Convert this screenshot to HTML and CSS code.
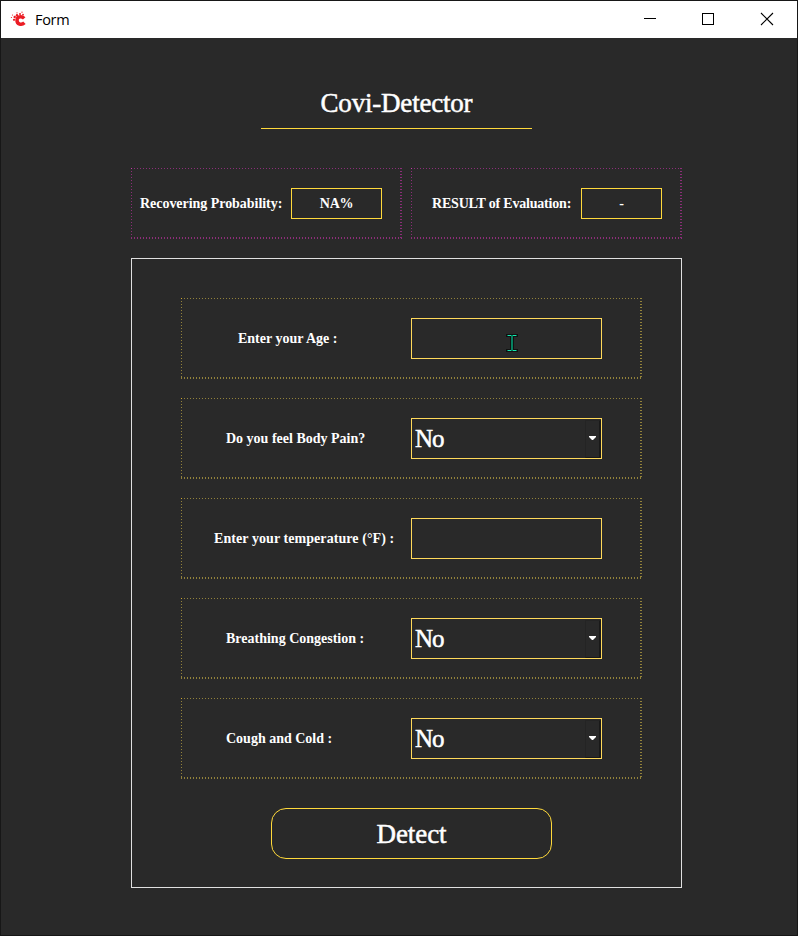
FILE: index.html
```html
<!DOCTYPE html>
<html lang="en">
<head>
<meta charset="utf-8">
<title>Form</title>
<link rel="stylesheet" href="styles.css">
</head>
<body>
<div class="window">
  <header class="titlebar">
    <svg class="logo" width="18" height="18" viewBox="0 0 18 18"><path d="M14.2 7.4C11.5 4.6 7.2 5.6 7 9C6.8 13.4 11.6 14.6 14.4 11.8" fill="none" stroke="#eb1c24" stroke-width="3.5"/><g fill="#eb1c24"><circle cx="4.7" cy="6" r="1.2"/><circle cx="7" cy="4.3" r="1.2"/><circle cx="10" cy="3" r="1"/><circle cx="13" cy="3.6" r=".9"/><circle cx="2.5" cy="4" r=".6"/><circle cx="4" cy="8.8" r="1.1"/><circle cx="1.4" cy="6.5" r=".6"/><circle cx="7" cy="1.8" r=".6"/><circle cx="12" cy="1.2" r=".6"/></g></svg>
    <span class="caption">Form</span>
    <svg class="controls" width="132" height="16" viewBox="0 0 132 16" fill="none" stroke="#000" shape-rendering="crispEdges"><path d="M1 6.5h12M59.5 1.5h11v11h-11z"/><path d="M118 1l12 12M130 1l-12 12" shape-rendering="auto" stroke-width="1.1"/></svg>
  </header>
  <main class="content">
    <h1 class="title">Covi-Detector</h1>
    <section class="results">
      <div class="dotted pink"><span class="label recovery">Recovering Probability:</span><output class="value wide">NA%</output></div>
      <div class="dotted pink"><span class="label result">RESULT of Evaluation:</span><output class="value">-</output></div>
    </section>
    <section class="panel">
      <div class="dotted row"><span class="label age">Enter your Age :</span><div class="field"><svg class="ibeam" width="12" height="18" viewBox="0 0 12 18" shape-rendering="crispEdges"><path d="M0 0h12v3H8v12h4v3H0v-3h4V3H0z" fill="#111"/><path d="M5 2h2v14H5z" fill="#078060"/><path d="M1 1h10v1H1zM1 16h10v1H1z" fill="#078060"/><path d="M2 1h3v1H2zM7 1h3v1H7zM2 16h3v1H2zM7 16h3v1H7z" fill="#16e8ae"/></svg></div></div>
      <div class="dotted row"><span class="label pain">Do you feel Body Pain?</span><div class="field"><span class="choice">No</span><span class="drop"></span></div></div>
      <div class="dotted row"><span class="label temp">Enter your temperature (°F) :</span><div class="field"></div></div>
      <div class="dotted row"><span class="label breath">Breathing Congestion :</span><div class="field"><span class="choice">No</span><span class="drop"></span></div></div>
      <div class="dotted row"><span class="label cough">Cough and Cold :</span><div class="field"><span class="choice">No</span><span class="drop"></span></div></div>
      <button class="detect">Detect</button>
    </section>
  </main>
</div>
</body>
</html>
```
FILE: styles.css
```css
* { box-sizing: border-box; }
body { margin: 0; background: #292929; color: #fff; font-family: "Liberation Serif", serif; }
.window { width: 798px; height: 936px; border: 1px solid #171717; overflow: hidden; }
.titlebar { height: 37px; background: #fff; color: #000; display: flex; align-items: center; padding: 0 22px 0 9px; }
.caption { font: 14.5px/20px "Open Sans", sans-serif; margin: 0 0 0 7px; letter-spacing: -.3px; }
.controls { margin-left: auto; }
.content { padding: 40px 115px 0 130px; }
.title { width: 271px; height: 51px; margin: 0 0 39px 130px; border-bottom: 1px solid #ffd93b; font-size: 27px; line-height: 51px; font-weight: 400; text-align: center; letter-spacing: -.2px; -webkit-text-stroke: .5px #fff; }
.results { display: flex; gap: 9px; margin-bottom: 19px; }
.dotted {
  --dot: #92823b; --corner: #d2a72d;
  display: flex;
  background:
    linear-gradient(var(--corner), var(--corner)) 0 0 / 1px 1px no-repeat,
    repeating-linear-gradient(90deg, var(--dot) 0 1px, transparent 1px 3px) 0 0 / 100% 1px no-repeat,
    repeating-linear-gradient(90deg, var(--dot) 0 1px, transparent 1px 3px) 0 100% / 100% 2px no-repeat,
    repeating-linear-gradient(var(--dot) 0 1px, transparent 1px 3px) 0 0 / 1px 100% no-repeat,
    repeating-linear-gradient(var(--dot) 0 1px, transparent 1px 3px) 100% 0 / 2px 100% no-repeat;
}
.pink { --dot: #8c2f79; --corner: #cc38ae; width: 271px; height: 71px; flex: none; padding: 20px 20px 0 9px; justify-content: space-between; }
.label { font-size: 14px; line-height: 31px; font-weight: 700; white-space: nowrap; }
.value { width: 81px; height: 31px; border: 1px solid #ffd93b; font-size: 14px; font-weight: 700; line-height: 29px; text-align: center; }
.value.wide { width: 91px; letter-spacing: -.3px; }
.recovery { letter-spacing: -.04px; }
.result { margin-left: 12px; letter-spacing: -.19px; }
.panel { width: 551px; height: 630px; border: 1px solid #e0e0e0; padding: 39px 49px 0; display: flex; flex-direction: column; gap: 19px; }
.row { width: 461px; height: 81px; flex: none; padding: 20px 40px 0 0; }
.row .label { line-height: 41px; }
.age { margin-left: 57px; }
.temp { margin-left: 33px; letter-spacing: .07px; }
.pain, .breath, .cough { margin-left: 45px; }
.field { width: 191px; height: 41px; border: 1px solid #ffd95a; margin-left: auto; display: flex; justify-content: space-between; position: relative; }
.choice { font-size: 25px; line-height: 40px; padding-left: 3px; letter-spacing: -1px; -webkit-text-stroke: .5px #fff; }
.drop { width: 16px; height: 38px; margin-top: 1px; border: 1px solid #242424; border-right: 2px solid #191919; border-bottom-color: #191919; display: flex; justify-content: center; padding-top: 15px; }
.drop::before { content: ""; width: 7px; height: 4px; flex: none; background: #fff; clip-path: polygon(0 0, 100% 0, 100% 25%, 57% 100%, 43% 100%, 0 25%); }
.ibeam { position: absolute; left: 94px; top: 15px; }
.detect { width: 281px; height: 51px; flex: none; margin: 10px 0 0 90px; padding: 1px 0 0; border: 1px solid #ffd93b; border-radius: 15px; background: transparent; color: #fff; font: 27px/48px "Liberation Serif", serif; letter-spacing: -.1px; -webkit-text-stroke: .5px #fff; }
```
